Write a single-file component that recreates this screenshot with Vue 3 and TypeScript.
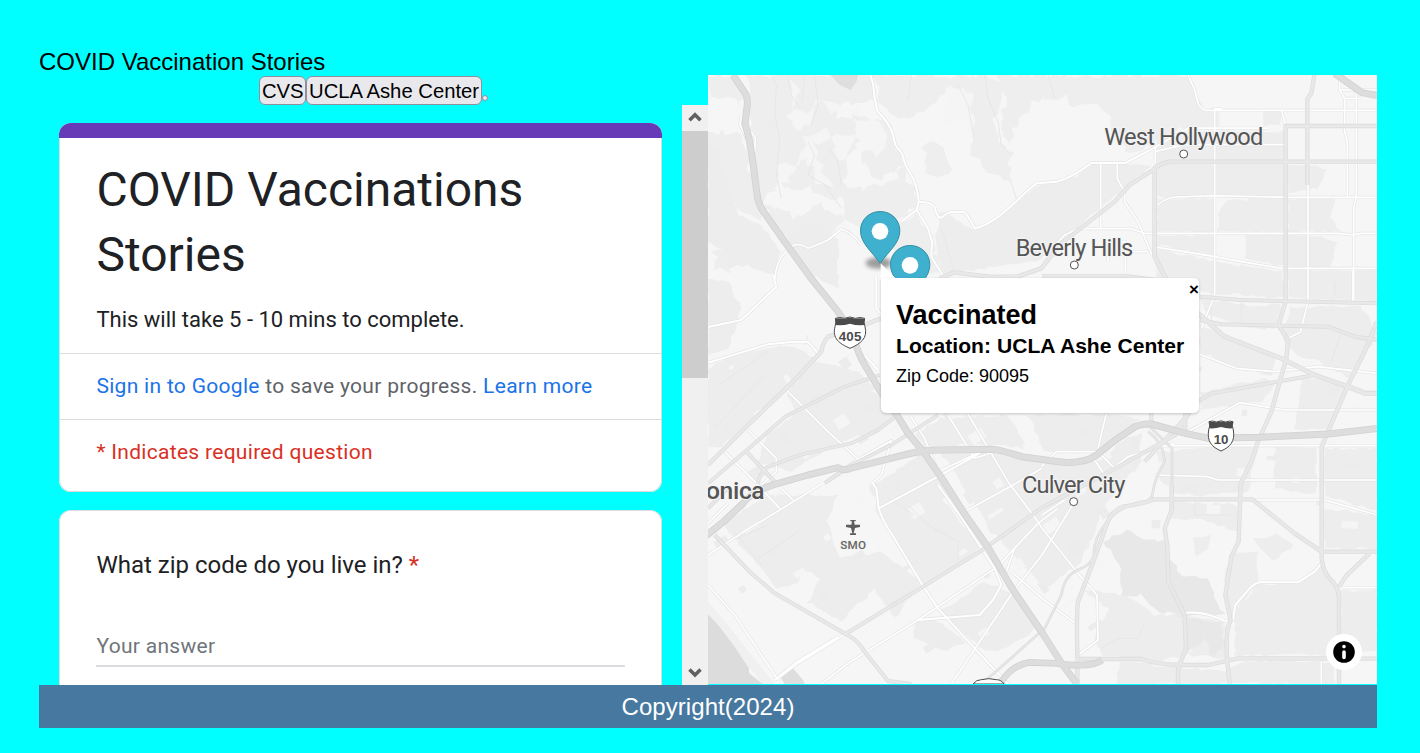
<script setup lang="ts">
import { ref } from 'vue'

interface Road { d: string; w: number }

const locations = ['CVS', 'UCLA Ashe Center']
const popupOpen = ref(true)

// The map canvas uses three units per CSS pixel: 2007 x 1827.
function roughen(src: string, amp: number, seed = 7): string {
  const pts = src.split(' ').map((p) => p.split(',').map(Number))
  let s = seed
  const rnd = () => {
    s = (s * 16807) % 2147483647
    return s / 2147483647 - 0.5
  }
  const out: string[] = []
  pts.forEach((a, i) => {
    const b = pts[(i + 1) % pts.length]
    const n = Math.max(1, Math.round(Math.hypot(b[0] - a[0], b[1] - a[1]) / 17))
    for (let k = 0; k < n; k++) {
      const x = a[0] + ((b[0] - a[0]) * k) / n + rnd() * amp
      const y = a[1] + ((b[1] - a[1]) * k) / n + rnd() * amp
      out.push(`${x.toFixed(1)},${y.toFixed(1)}`)
    }
  })
  return out.join(' ')
}

const hills = [
  '0,180 60,170 95,190 115,260 140,340 160,440 90,400 60,330 0,310',
  '0,0 75,0 105,60 100,90 60,60 0,80',
  '20,530 60,530 75,560 60,590 30,580',
  '120,0 490,0 500,80 400,90 390,130 440,130 460,190 430,240 410,300 420,360 350,370 310,330 260,350 215,320 160,400 140,300 130,190 118,90',
  '500,0 830,0 900,30 860,120 870,180 910,230 900,310 840,300 790,240 795,150 740,60 690,70 610,140 560,120 520,90',
  '160,380 210,400 250,430 330,390 410,430 380,470 310,510 250,510 210,460',
  '400,350 520,330 590,280 630,380 560,440 470,470 400,420',
  '440,120 530,130 590,270 520,320 460,260 480,190',
  '870,0 1070,0 1100,40 1060,70 1000,60 930,130 905,220 880,160 895,60',
  '1040,0 1440,0 1460,60 1480,105 1540,110 1520,160 1380,160 1330,210 1260,230 1230,190 1200,110 1130,80 1090,100',
  '650,215 690,200 725,280 690,310 660,290',
  '580,445 630,410 680,520 690,600 600,600 560,500',
].map((p, i) => roughen(p, 22, 31 + i * 97))

const clearings = [
  '220,260 260,270 300,250 330,330 370,330 350,300 320,210 370,180 350,160 290,190 280,250 240,320 200,310',
  '380,190 440,170 470,130 520,140 540,200 510,240 480,230 450,180 420,240 390,260',
  '730,20 790,60 800,200 770,130 720,150 700,110',
  '255,20 270,50 255,110 300,110 330,70 320,130 280,170 240,120',
  '350,75 420,100 460,90 450,115 360,110',
].map((p, i) => roughen(p, 22, 53 + i * 41))

const blocks = [
  '700,410 800,465 880,420 990,330 1050,318 1110,300 1150,266 1330,270 1260,330 1150,420 1000,556 760,590 700,600 680,500',
  '1345,170 1730,170 1730,365 1520,360 1370,370 1345,360',
  '1350,375 1520,370 1520,470 1345,470',
  '1560,375 1730,370 1730,470 1530,470 1530,415',
  '1740,370 1880,365 1870,430 1900,470 1740,470',
  '1345,480 1520,480 1520,540 1345,510',
  '1615,480 1800,480 1890,500 1870,580 1800,580 1700,570 1610,550',
  '1670,110 1725,110 1720,150 1670,150',
  '1740,265 1860,280 1830,340 1740,350',
  '1345,520 1520,560 1720,590 1730,670 1480,650 1345,620',
  '1740,585 2007,585 2007,680 1740,670',
  '1480,670 1620,690 1720,690 1700,760 1630,760 1500,720',
  '1475,750 1580,790 1700,840 1690,900 1580,880 1475,830',
  '1750,700 1960,690 2007,780 1930,910 1850,870 1750,830 1720,780',
  '1780,900 1920,940 1860,1060 1760,1060',
  '1480,950 1670,910 1700,930 1660,980 1560,990 1480,1010',
  '0,200 30,240 90,420 160,450 220,530 200,600 160,590 120,570 60,580 60,530 0,500',
  '300,440 390,490 390,640 310,600 240,510',
  '0,615 60,620 100,700 60,820 0,840',
  '0,880 100,830 250,810 320,850 290,900 200,970 120,1050 30,1120 0,1120',
  '240,960 300,900 410,920 500,950 560,1020 510,1070 430,1090 350,1120 290,1060',
  '180,1080 270,1010 330,1070 350,1130 250,1190 150,1160',
  '310,860 450,890 510,950 410,930 260,990 240,950',
  '700,1030 900,1020 960,1120 860,1110 760,1110 660,1130 620,1080',
  '600,1160 640,1140 740,1260 620,1300 510,1290 480,1240',
  '180,1260 390,1260 360,1340 380,1420 300,1470 270,1520 210,1540 60,1370 50,1340',
  '240,1350 340,1350 400,1450 520,1430 640,1520 560,1630 500,1540 400,1640 300,1580 340,1510 250,1470',
  '500,1240 680,1245 820,1420 650,1530 500,1310 510,1270',
  '620,1640 690,1640 770,1700 700,1730 620,1690',
  '700,1610 830,1520 900,1550 1000,1650 900,1720 830,1730',
  '700,1130 920,1130 1002,1160 1180,1160 1240,1100 1300,1070 1300,1160 1190,1290 1120,1460 1010,1540 850,1370',
  '960,1020 1180,1020 1300,1030 1160,1130 1010,1130',
  '1350,1130 1590,1110 1650,1120 1620,1250 1480,1260 1390,1250 1350,1200',
  '1390,1280 1590,1290 1590,1370 1530,1350 1480,1330 1380,1330',
  '1850,1120 2007,1120 2007,1310 1850,1260',
  '1850,1300 2007,1320 2007,1420 1850,1420',
  '1700,1110 1830,1120 1820,1260 1700,1240',
  '1570,1440 1650,1430 1650,1520 1600,1580 1570,1620 1550,1500',
  '1640,1390 1700,1380 1760,1410 1700,1460 1650,1410',
  '1460,1390 1510,1380 1500,1420 1465,1440',
  '1580,1610 1650,1530 1780,1520 1840,1460 1890,1550 1890,1740 1580,1740',
  '1120,1540 1250,1560 1340,1620 1430,1620 1440,1740 1340,1760 1180,1740 1160,1690 1200,1600',
  '1430,1620 1550,1640 1550,1750 1440,1740 1460,1700 1440,1680',
  '1240,1760 1550,1790 1600,1760 1880,1760 1880,1827 1220,1827',
  '1900,1550 2007,1540 2007,1730 1900,1740',
].map((p, i) => roughen(p, 10, 11 + i * 67))

const parks = [
  '1190,1400 1260,1360 1300,1395 1370,1400 1385,1450 1420,1500 1500,1510 1520,1570 1550,1620 1430,1620 1350,1610 1300,1560 1240,1560 1240,1480',
  '1430,1630 1540,1640 1545,1720 1510,1750 1490,1690 1440,1730',
].map((p) => roughen(p, 10, 19))

const whiteBlocks = Array.from({ length: 130 }, (_, i) => {
  const cx = (i * 389 + 61) % 1960
  const cy = 840 + ((i * 223 + 37) % 940)
  const w = 15 + ((i * 17) % 38)
  const h = 10 + ((i * 29) % 28)
  const tilt = cx < 1250 ? -32 : 4
  return { cx, cy, w, h, t: `rotate(${tilt} ${cx} ${cy})`, light: i % 2 === 0 }
}).filter((b) => !(b.cx > 1180 && b.cy > 1350) && !(b.cx < 620 && b.cy > 1560))

const motorways: Road[] = [
  { w: 19, d: 'M75,0 L105,45 Q120,62 118,88 L111,145 L125,200 L136,270 L146,350 Q150,390 170,415 L230,500 L310,611 L390,710 Q425,760 440,800 Q450,830 462,855 L515,945 L570,1025 L600,1075 L650,1135 L705,1215 L770,1317 L840,1417 L910,1537 L1005,1677 L1062,1767 L1107,1827' },
  { w: 19, d: 'M-8,1384 L50,1337 L105,1285 Q130,1250 200,1228 L300,1200 L390,1178 Q408,1190 435,1178 L500,1162 L600,1137 Q650,1125 700,1125 L860,1123 Q890,1128 940,1145 Q1010,1155 1070,1162 Q1130,1164 1162,1143 L1222,1095 L1280,1056 Q1300,1045 1330,1047 L1432,1075 L1502,1090 L1652,1087 L1862,1077 L2010,1060' },
  { w: 19, d: 'M1880,-5 L1962,53 L2010,62' },
  { w: 18, d: 'M876,1827 Q910,1770 965,1762 L1045,1765 Q1150,1780 1182,1755' },
]

const trunks: Road[] = [
  { w: 11, d: 'M1820,-5 L1810,55 L1798,72 V330 M2010,153 H1733 V500 L1733,680 L1711,750 L1740,795 L1735,850 L1690,1010 L1650,1100 L1630,1160 L1598,1225 L1592,1400 L1570,1445 L1552,1560 L1568,1635 Q1550,1670 1558,1760 L1565,1827' },
  { w: 11, d: 'M2010,260 H1385 Q1350,268 1335,285 L1265,330 L1220,380 L1060,505 L1000,580 L930,604 L850,606 L740,592 L700,608 L630,680 L520,730 L430,765 L360,785 Q345,800 340,830 L240,935 L120,1050 L0,1170' },
  { w: 12, d: 'M1340,285 L1340,545 L1376,615 L1470,715 L1510,750 L1550,785 L1720,850 L1820,900 L1905,930 L1970,955 L2010,955' },
  { w: 10, d: 'M1002,604 H1260 L1390,620 L1476,665 L1600,675 L2010,685 M1476,735 L1540,748 L1860,755 L1940,785 L2010,795' },
  { w: 11, d: 'M2007,740 L1970,830 L1920,930 L1860,1070 L1841,1115 L1841,1450 Q1845,1490 1865,1510 Q1893,1535 1893,1570 V1827' },
  { w: 11, d: 'M1841,1430 H2010 M1985,1435 L1915,1502 L1893,1535 M1841,1430 L1760,1375 L1633,1273 H1340 Q1300,1288 1245,1295 Q1205,1310 1193,1358 L1150,1475 L1110,1580 Q1105,1610 1108,1750 V1827' },
  { w: 11, d: 'M1391,1227 V1305 L1370,1360 L1378,1415 L1381,1520 L1430,1620 L1434,1720 L1410,1780 V1827 M1101,1752 H1300 Q1350,1770 1430,1770 L1500,1770 L1590,1750 L2010,1751' },
  { w: 10, d: 'M20,1380 L130,1495 L200,1555 L413,1677 Q450,1695 470,1730 L540,1818 L610,1827 M413,1677 L645,1535 L820,1427 L1002,1298 L1240,1170 L1402,1080 L1440,1020 L1470,978 L1512,955 L1820,900' },
  { w: 9, d: 'M0,1225 L100,1140 L232,1025 L410,935 L515,900 M150,1227 Q155,1190 180,1175 L275,1140 L430,1105 L510,1065 L570,1020 M350,1225 L420,1175 L550,1110 L690,1020' },
  { w: 6, d: 'M1320,1050 L1392,1120 V1230 M1320,1070 Q1365,1100 1370,1160 Q1340,1210 1335,1250 Q1332,1280 1305,1280 Q1225,1295 1190,1350 Q1155,1395 1158,1440 Q1150,1470 1110,1485 Q1070,1500 1060,1560 L1010,1660 L920,1740 L835,1815' },
  { w: 10, d: 'M115,1130 L200,1220 L140,1260 M0,1300 L60,1240 M1310,1160 L1440,1020 M1432,1010 V1075 M1330,950 V1040' },
]

const streets: Road[] = [
  { w: 6, d: 'M487,0 L495,25 L500,70 L508,108 Q545,145 555,180 L562,210 L582,235 L592,270 L615,310 Q630,345 632,380 L626,405 L580,440 M626,405 L660,460 L672,500 L670,545 L710,610 M632,380 Q670,380 680,397 Q690,440 707,423 Q720,405 770,412 Q785,430 800,460 Q850,450 915,388 Q970,335 985,325 L1045,320 Q1090,310 1150,264 H1252 L1335,220 L1440,160 H1680' },
  { w: 5, d: 'M250,515 Q270,500 300,520 Q330,510 360,495 L400,462 Q430,470 460,510 M240,525 Q205,550 200,615 M100,120 L96,150 L115,190 M130,170 L142,190 L140,230' },
  { w: 5, d: 'M1440,0 L1458,40 L1472,90 L1490,106 H2007 M1542,101 H1520 V660 L1480,760 M1720,103 L1732,150 M1340,230 L1430,209 H1730 M1342,215 V265' },
  { w: 5, d: 'M1178,264 V460 M1228,264 V312 L1250,350 V380 L1290,440 L1332,540 M1000,555 L1070,480 L1110,461 H1270 L1310,475 H1890 L1935,480 L1960,475 H2007 M1350,388 Q1380,365 1410,366 L1520,362 L1740,367 H2007' },
  { w: 5, d: 'M1335,515 L1520,545 L1600,560 L1720,580 H2007 M1800,330 V680 L1777,772 L1740,790 M1895,0 V45 L1910,70 V170 L1918,200 V365 M1945,50 V365 L1937,400 V675 M1910,70 H1960 M1895,45 H2007' },
  { w: 5, d: 'M1475,838 L1585,880 L1700,890 L1830,875 L2007,895 M1920,930 L1970,950 H2007 M1440,1070 L1595,983 L1730,1005 H2007 M1380,1112 H2007 M1340,1200 L1500,1205 L1530,1215 H2007 M1240,500 H1252 V604 M1200,560 V530 H1320' },
  { w: 6, d: 'M-5,865 L180,808 L260,800 L300,800 L330,835 M-5,757 L100,735 L205,635 L195,600 M505,600 V700 L517,715 M470,840 L510,885' },
  { w: 5, d: 'M235,945 L360,1070 L470,1170 M120,1065 L205,1150 V1190 L160,1230 M50,1130 L140,1220 L215,1300 M575,1025 L700,1210 M605,1020 L650,1090 L690,1190 L860,1110 M720,1020 L800,1150 L860,1130 M770,1000 L900,1220 L990,1340 L1002,1360' },
  { w: 5, d: 'M420,1170 L550,1097 L520,1200 L490,1227 M1195,1015 L1170,1120 M1000,1175 L1045,1130 H1170 M1160,1155 L1190,1200 L1260,1145 L1400,1105 M1175,1135 L1220,1180 M0,1440 L100,1375 L240,1290 L340,1227 M220,1240 L255,1275' },
  { w: 6, d: 'M492,1222 L505,1240 L512,1300 Q525,1340 550,1375 L640,1525 L690,1600 L800,1720 L900,1827 M512,1300 L690,1205 L850,1115 M690,1230 L755,1320 L860,1480 L880,1530 L855,1575 L815,1620 L630,1635' },
  { w: 5, d: 'M340,1827 L420,1765 L630,1635 L860,1480 M210,1810 L270,1765 L413,1677 M200,1815 L260,1765 L390,1685 M-5,1525 L80,1620 L210,1815 M730,1827 L915,1550 L1002,1440 L1100,1280 M865,1480 L910,1430 L990,1345 L1050,1300' },
  { w: 5, d: 'M770,1310 L915,1230 L1002,1180 M0,1345 L60,1285 M1002,1360 L1110,1495 L1167,1560 L1170,1695 L1110,1740 M910,1490 L1002,1570 L1102,1645 M895,1490 L920,1420 M1002,1320 L1070,1275' },
  { w: 6, d: 'M1430,1615 Q1480,1605 1555,1640 L1575,1635 L1582,1590 L1625,1540 Q1650,1515 1680,1522 H1770 L1820,1490 L1840,1465' },
  { w: 5, d: 'M1633,1275 H1850 L1920,1295 L2007,1320 M1900,1538 H2007 M1840,1755 V1827 M1935,585 V680' },
]

const contours = [
  'M190,0 L205,30 L200,120 L215,190 L205,300 L220,370 M240,10 L250,60 L275,100 M290,0 L282,80 M320,0 L330,90 L310,150',
  'M300,200 L320,240 L300,300 L370,340 M360,220 L390,260 L400,330 M350,330 L400,400 M610,0 L600,80 M750,30 L780,90 L800,200',
  'M830,0 L840,70 L870,140 L880,210 L910,240 M905,310 L925,370 M1020,0 L1040,70 M700,460 L740,590',
  'M30,930 L180,830 M300,780 L290,810 M20,1060 L170,900 M80,1370 L160,1470 M90,1390 L180,1350 M150,1450 L270,1370 M600,1290 L660,1350 L750,1400 V1460 M540,1270 L620,1320',
  'M1510,650 V750 M1600,680 V740 M1880,620 V660 M1900,770 L1870,860 M1460,1280 V1320 H1580 M1180,1720 L1230,1690 L1290,1690 L1310,1640 M1400,1620 L1480,1640',
]

const towns = [
  { name: 'West Hollywood', x: 1189, y: 209, w: 477, cx: 1427, cy: 237 },
  { name: 'Beverly Hills', x: 923, y: 542, w: 353, cx: 1099, cy: 570 },
  { name: 'Culver City', x: 942, y: 1253, w: 310, cx: 1097, cy: 1280 },
]

const pins = [
  { x: 456, y: 408 },
  { x: 546, y: 510 },
]
</script>

<template>
  <div class="page">
    <header class="title">COVID Vaccination Stories</header>
    <main class="main">
      <section class="left">
        <nav class="buttons">
          <button v-for="name in locations" :key="name" class="loc">{{ name }}</button>
          <button class="loc empty" aria-label="blank"></button>
        </nav>
        <div class="frame">
          <div class="form">
            <article class="card">
              <div class="accent"></div>
              <div class="intro">
                <h1>COVID Vaccinations Stories</h1>
                <p>This will take 5 - 10 mins to complete.</p>
              </div>
              <div class="row"><a>Sign in to Google</a> to save your progress. <a>Learn more</a></div>
              <div class="row required">* Indicates required question</div>
            </article>
            <article class="card question">
              <div class="ask">What zip code do you live in? <span>*</span></div>
              <div class="answer">Your answer</div>
            </article>
          </div>
          <div class="scrollbar">
            <div class="arrow">
              <svg width="26" height="26" viewBox="0 0 26 26"><path d="M7.500 15.300 13 9.800 18.500 15.300" /></svg>
            </div>
            <div class="thumb"></div>
            <div class="arrow last">
              <svg width="26" height="26" viewBox="0 0 26 26"><path d="M7.500 10.500 13 16 18.500 10.500" /></svg>
            </div>
          </div>
        </div>
      </section>

      <section class="map">
        <svg class="canvas" viewBox="0 0 2007 1827" preserveAspectRatio="none">
          <defs>
            <filter id="soft" x="-50%" y="-50%" width="200%" height="200%">
              <feGaussianBlur stdDeviation="7" />
            </filter>
          </defs>
          <rect width="2007" height="1827" fill="#f6f6f6" />
          <polygon v-for="(p, i) in hills" :key="'h' + i" :points="p" fill="#eeeeee" />
          <polygon v-for="(p, i) in clearings" :key="'c' + i" :points="p" fill="#f5f5f5" />
          <polygon v-for="(p, i) in blocks" :key="'b' + i" :points="p" fill="#ededed" />
          <rect
            v-for="(b, i) in whiteBlocks" :key="'w' + i" :x="b.cx" :y="b.cy" :width="b.w" :height="b.h"
            :transform="b.t" :fill="b.light ? '#f5f5f5' : '#ececec'"
          />
          <polygon v-for="(p, i) in parks" :key="'p' + i" :points="p" fill="#e8e8e8" />
          <path d="M0,1615 L40,1660 L90,1730 L125,1780 L165,1827 H200 L130,1740 L60,1650 L0,1580Z" fill="#f0f0f0" />
          <path d="M0,1617 L35,1655 L80,1715 L123,1780 V1795 L165,1827 H0Z" fill="#dcdcdc" />
          <path d="M368,0 H450 L445,20 L428,45 L395,30Z M215,1802 L255,1780 L285,1815 L290,1827 H230Z" fill="#dedede" />
          <path v-for="(d, i) in contours" :key="'k' + i" :d="d" fill="none" stroke="#e7e7e7" stroke-width="3" />

          <g fill="none" stroke-linejoin="round">
            <path v-for="(r, i) in streets" :key="'sc' + i" :d="r.d" stroke="#e4e4e4" :stroke-width="r.w + 4" />
            <path v-for="(r, i) in streets" :key="'s' + i" :d="r.d" stroke="#ffffff" :stroke-width="r.w" />
            <path v-for="(r, i) in trunks" :key="'tc' + i" :d="r.d" stroke="#dbdbdb" :stroke-width="r.w + 2" />
            <path v-for="(r, i) in trunks" :key="'t' + i" :d="r.d" stroke="#e8e8e8" :stroke-width="r.w - 2" />
            <path v-for="(r, i) in motorways" :key="'mc' + i" :d="r.d" stroke="#d2d2d2" :stroke-width="r.w + 2" />
            <path v-for="(r, i) in motorways" :key="'m' + i" :d="r.d" stroke="#dddddd" :stroke-width="r.w - 3" />
          </g>

          <g class="town">
            <template v-for="t in towns" :key="t.name">
              <text :x="t.x" :y="t.y" :textLength="t.w">{{ t.name }}</text>
              <circle :cx="t.cx" :cy="t.cy" r="12" fill="#fff" stroke="#555" stroke-width="3" />
            </template>
            <text class="big" x="-6" y="1273" textLength="176">onica</text>
          </g>

          <g>
            <path d="M382,730 Q395,725 410,730 Q425,722 442,730 Q457,725 470,730 Q466,742 471,755 C480,790 458,806 426,820 C394,806 372,790 381,755 Q386,742 382,730Z" fill="#fff" stroke="#4b4b4b" stroke-width="3" />
            <path d="M382,731 Q395,728 410,731 Q425,726 442,731 Q457,728 470,731 L468,750 Q446,752 426,746 Q406,752 383,750Z" fill="#4b4b4b" />
            <text class="shield" x="392" y="799" textLength="68">405</text>
            <path d="M1503,1040 Q1514,1036 1525,1041 Q1539,1034 1553,1041 Q1564,1036 1575,1040 Q1570,1052 1576,1065 C1582,1100 1566,1116 1539,1128 C1512,1116 1496,1100 1502,1065 Q1508,1052 1503,1040Z" fill="#fff" stroke="#4b4b4b" stroke-width="3" />
            <path d="M1503,1041 Q1514,1039 1525,1042 Q1539,1037 1553,1042 Q1564,1039 1575,1041 L1572,1060 Q1555,1061 1539,1056 Q1523,1061 1505,1060Z" fill="#4b4b4b" />
            <text class="shield" x="1517" y="1108" textLength="44">10</text>
            <path d="M795,1827 Q805,1814 820,1814 Q842,1808 865,1814 Q880,1814 888,1827Z" fill="#fff" stroke="#4b4b4b" stroke-width="3" />
          </g>

          <path d="M427,1335 H443 V1339 H438 L440,1349 H456 V1356 L441,1359 L437,1375 H444 V1380 H426 V1375 H433 L429,1359 L414,1356 V1349 H430 L432,1339 H427Z" fill="#5d5d5d" />
          <text class="airport" x="397" y="1422" textLength="77">SMO</text>

          <g v-for="(p, i) in pins" :key="i" :transform="`translate(${p.x} ${p.y})`">
            <ellipse cx="56" cy="156" rx="39" ry="17" fill="#000" opacity="0.36" filter="url(#soft)" />
            <path d="M60.500 1.500C27 1.500 1.500 27 1.500 59C1.500 97 35 120 60.500 157C86 120 119.500 97 119.500 59C119.500 27 94 1.500 60.500 1.500Z" fill="#3fb1ce" stroke="#328ea5" stroke-width="3" />
            <circle cx="60" cy="61" r="25" fill="#fff" />
          </g>
          <path d="M518,565 L518,615 H568Z" fill="#fff" />
        </svg>

        <div v-if="popupOpen" class="popup">
          <button class="close" @click="popupOpen = false">×</button>
          <h2>Vaccinated</h2>
          <h3>Location: UCLA Ashe Center</h3>
          <div>Zip Code: 90095</div>
        </div>

        <div class="info">
          <svg width="24" height="24" viewBox="0 0 20 20" fill-rule="evenodd">
            <path d="M4 10a6 6 0 1 0 12 0a6 6 0 1 0-12 0m5-3a1 1 0 1 0 2 0a1 1 0 1 0-2 0m0 3a1 1 0 1 1 2 0v3a1 1 0 1 1-2 0" transform="translate(-5 -5) scale(1.500)" />
          </svg>
        </div>
      </section>
    </main>
    <footer class="footer">Copyright(2024)</footer>
  </div>
</template>

<style>
body {
  background: #00ffff;
  overflow: hidden;
}
</style>

<style scoped>
.page {
  box-sizing: border-box;
  height: 753px;
  padding: 48px 43px 25px 39px;
  font-family: "Liberation Sans", Arial, sans-serif;
  font-size: 24px;
  color: #000;
}
.title {
  height: 27px;
  line-height: 28px;
}
.main {
  display: flex;
  height: 610px;
}
.left {
  width: 669px;
}
.buttons {
  display: flex;
  justify-content: center;
  align-items: center;
  height: 30px;
}
.loc {
  height: 29px;
  margin: 1px 0 0;
  padding: 1px 1.750px 0;
  border: 1px solid #8f8f9d;
  border-radius: 6px;
  background: #e9e9ed;
  font: 20.250px/27px "Liberation Sans", Arial, sans-serif;
  color: #000;
}
.empty {
  align-self: flex-end;
  width: 6px;
  height: 6px;
  margin-bottom: 4px;
  padding: 0;
}
.frame {
  display: flex;
  height: 580px;
  overflow: hidden;
}
.form {
  display: flex;
  flex-direction: column;
  gap: 18px;
  width: 643px;
  box-sizing: border-box;
  padding: 18px 20px 0;
  font-family: Roboto, sans-serif;
}
.card {
  flex: none;
  box-sizing: border-box;
  height: 369px;
  overflow: hidden;
  background: #fff;
  border-radius: 12px;
  box-shadow: inset 0 0 0 1px #dadce0;
}
.accent {
  height: 15px;
  background: #673ab7;
}
.intro {
  box-sizing: border-box;
  height: 215px;
  padding: 19px 37px 0 37.400px;
  color: #202124;
}
h1 {
  margin: 0;
  font-size: 48px;
  line-height: 65px;
  font-weight: 400;
}
p {
  margin: 16px 0 0;
  font-size: 22px;
  line-height: 33px;
}
.row {
  height: 65px;
  padding-left: 37.400px;
  border-top: 1px solid #dadce0;
  font-size: 21px;
  line-height: 65px;
  letter-spacing: 0.300px;
  color: #5f6368;
}
.row a {
  color: #1a73e8;
}
.required {
  color: #d93025;
}
.question {
  height: 300px;
  padding: 37px 37px 0;
}
.ask {
  padding-left: 0.400px;
  font-size: 24px;
  line-height: 36px;
  color: #202124;
}
.ask span {
  color: #d93025;
}
.answer {
  height: 36px;
  margin-top: 46px;
  padding-left: 0.400px;
  border-bottom: 2px solid #dadce0;
  font-size: 21px;
  line-height: 34px;
  letter-spacing: 0.300px;
  color: #70757a;
}
.scrollbar {
  display: flex;
  flex-direction: column;
  width: 26px;
  background: #f0f0f0;
}
.arrow {
  height: 26px;
}
.arrow svg {
  display: block;
}
.arrow path {
  fill: none;
  stroke: #606060;
  stroke-width: 3.500;
}
.last {
  margin-top: auto;
}
.thumb {
  height: 247px;
  background: #cdcdcd;
}
.map {
  position: relative;
  width: 669px;
  height: 609px;
  overflow: hidden;
}
.canvas {
  display: block;
  width: 669px;
  height: 609px;
}
.town text {
  font-family: Roboto, sans-serif;
  font-size: 71px;
  fill: #555;
  stroke: #f4f4f4;
  stroke-width: 6px;
  paint-order: stroke;
}
.town .big {
  font-size: 74px;
  font-weight: 500;
}
.shield {
  font: bold 40px "Liberation Sans", sans-serif;
  fill: #4b4b4b;
}
.airport {
  font: 500 35px Roboto, sans-serif;
  fill: #666;
  stroke: #f2f2f2;
  stroke-width: 5px;
  paint-order: stroke;
}
.popup {
  position: absolute;
  left: 173px;
  top: 203px;
  box-sizing: border-box;
  width: 318px;
  height: 135px;
  padding: 22px 15px 0;
  border-radius: 0 5px 5px 5px;
  background: #fff;
  box-shadow: 0 1px 3px rgba(0, 0, 0, 0.200);
  font-size: 18px;
  line-height: 30px;
  white-space: nowrap;
}
.popup h2 {
  margin: 0;
  font-size: 27px;
  line-height: 31px;
}
.popup h3 {
  margin: 0;
  font-size: 21.060px;
  line-height: 30px;
  letter-spacing: 0.040px;
}
.close {
  position: absolute;
  right: 0;
  top: 0;
  width: 10px;
  height: 24px;
  padding: 0;
  border: 0;
  background: transparent;
  font: bold 17px/24px "Liberation Sans", sans-serif;
}
.info {
  position: absolute;
  right: 15px;
  bottom: 14px;
  display: flex;
  align-items: center;
  justify-content: center;
  width: 36px;
  height: 36px;
  border-radius: 18px;
  background: #fff;
}
.footer {
  height: 43px;
  background: #4678a0;
  color: #fff;
  text-align: center;
  line-height: 44px;
  letter-spacing: 0.050px;
}
</style>
